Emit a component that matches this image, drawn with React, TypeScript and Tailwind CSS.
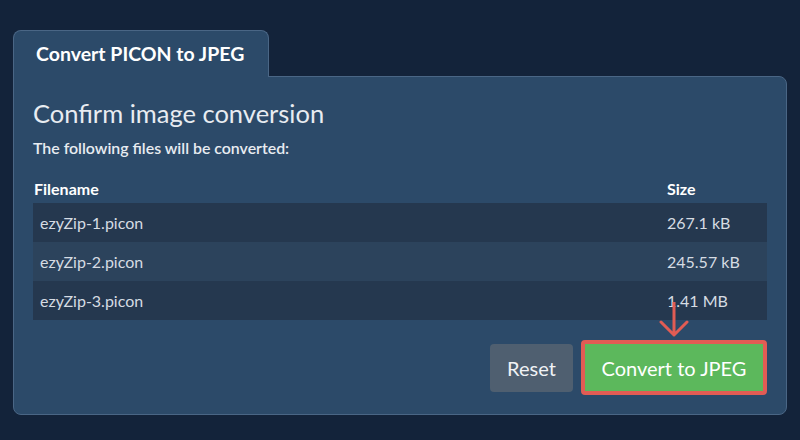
import React from "react";

const rows = [
  { name: "ezyZip-1.picon", size: "267.1 kB" },
  { name: "ezyZip-2.picon", size: "245.57 kB" },
  { name: "ezyZip-3.picon", size: "1.41 MB" },
];

export default function App() {
  return (
    <div
      className="w-[800px] h-[440px] bg-[#13233a] pt-[30px] pl-[13px] overflow-hidden"
      style={{ fontFamily: "Lato, 'Noto Sans', sans-serif" }}
    >
      <div className="w-[774px]">
        <div className="relative z-10 w-[256px] h-[47px] bg-[#2c4a69] border border-b-0 border-[#4a6685] rounded-t-[8px] flex items-center pl-[22px] -mb-px">
          <span className="text-white font-bold text-[19.5px] leading-none">Convert PICON to JPEG</span>
        </div>
        <div className="h-[339px] bg-[#2c4a69] border border-[#4a6685] rounded-b-[8px] rounded-tr-[8px] px-[19px] pt-[20px]">
          <h1 className="text-[#e8ecf1] text-[25.5px] leading-[32px] font-normal">Confirm image conversion</h1>
          <p className="text-[#e8ecf1] text-[15.9px] leading-[18px] font-semibold mt-[10px]">The following files will be converted:</p>
          <div className="mt-[18px] w-[734px]">
            <div className="flex h-[28px] items-center text-white font-bold text-[16px]">
              <div className="flex-1 pl-[1px]">Filename</div>
              <div className="w-[100px]">Size</div>
            </div>
            {rows.map((r, i) => (
              <div
                key={r.name}
                className={`flex h-[39px] items-center text-[#d6dce3] text-[16px] ${i % 2 === 0 ? "bg-[#25384f]" : "bg-[#2c435c]"}`}
              >
                <div className="flex-1 pl-[7px]">{r.name}</div>
                <div className="w-[100px] relative">{r.size}</div>
              </div>
            ))}
          </div>
          <div className="relative flex justify-end items-center gap-[8px] mt-[20px] w-[734px]">
            <svg className="absolute left-[626px] top-[-38px]" width="30" height="36" viewBox="0 0 30 36">
              <path d="M15 0 V33 M2 20 L15 33 L28 20" stroke="#e25c54" strokeWidth="3" fill="none" strokeLinecap="round" strokeLinejoin="round" />
            </svg>
            <button className="h-[48px] w-[83px] rounded-[4px] bg-[#4f5f70] text-[#f0f2f5] text-[20px]">Reset</button>
            <div className="border-[4px] border-[#e25c54] rounded-[4px]">
              <button className="h-[47px] w-[178px] bg-[#5cb85c] text-white text-[20px]">Convert to JPEG</button>
            </div>
          </div>
        </div>
      </div>
    </div>
  );
}
